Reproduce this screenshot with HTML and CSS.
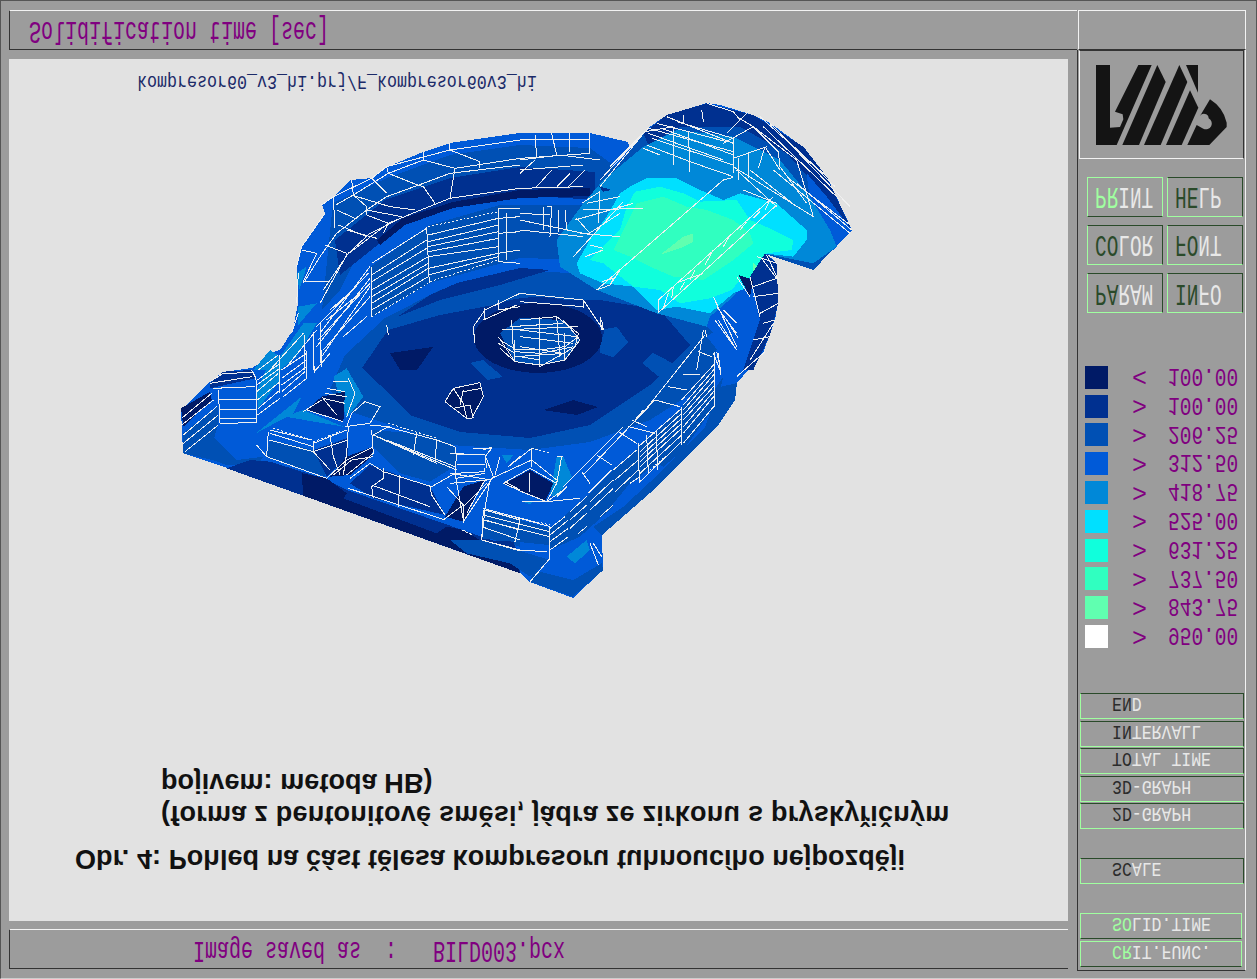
FILE: index.html
```html
<!DOCTYPE html>
<html lang="cs">
<head>
<meta charset="utf-8">
<title>Solidification time</title>
<link rel="stylesheet" href="styles.css">
</head>
<body>
<div class="screen">
  <div class="main-col">
    <div class="title-bar"><span class="flip title-text">Solidification time [sec]</span></div>
    <div class="canvas">
      <div class="path-line"><span class="flip path-text">kompresor60_v3_hi.prj/F_kompresor60v3_hi</span></div>
      <svg class="model" viewBox="9 90 1059 660" width="1059" height="660" aria-label="Casting model">
        <polygon class="c3" points="181,410 210,382 223,372 252,368 260,363 270,353 280,350 293,330 298,303 297,267 302,247 325,213 322,205 333,197 350,180 372,178 387,167 423,152 450,143 520,133 553,133 590,133 628,142 630,148 643,133 648,128 667,115 707,103 720,105 753,115 770,123 803,147 827,177 852,230 813,270 765,253 777,263 778,303 775,320 763,353 737,383 735,400 717,427 690,453 650,493 602,535 603,570 573,598 530,582 520,573 227,468 183,453"/>
        <polygon class="c2" points="330,390 345,355 385,318 440,290 520,270 600,275 700,320 720,340 705,385 650,420 590,442 530,450 450,445 390,425 345,410"/>
        <polygon class="c1" points="362,368 388,330 440,315 520,300 600,300 660,310 690,345 650,385 590,425 530,438 460,432 410,415 380,385"/>
        <polygon class="c2" points="642,363 653,353 680,367 663,380"/>
        <polygon class="c0" points="390,353 433,347 417,370 400,370"/>
        <polygon class="c0" points="543,410 573,400 598,407 577,415"/>
        <polygon class="c2" points="600,330 617,327 628,342 613,357 600,353"/>
        <polygon class="c2" points="470,363 483,360 503,377 487,380"/>
        <ellipse class="c1" cx="538" cy="330" rx="66" ry="33"/>
        <ellipse class="c0" cx="538" cy="338" rx="64" ry="35"/>
        <polygon class="c2" points="500,333 515,362 540,365 565,360 580,340 563,320 520,318"/>
        <polygon class="c3" points="335,205 387,170 450,147 520,137 590,137 628,150 590,175 520,170 450,180 400,215 360,250 340,290 320,300 325,250"/>
        <polygon class="c2" points="333,203 387,178 450,155 520,145 590,148 620,170 595,200 520,185 455,195 400,215 360,250 340,290 322,310"/>
        <polygon class="c1" points="335,240 385,200 450,178 520,167 595,172 595,200 520,195 453,207 403,225 365,255 340,275"/>
        <polygon class="c0" points="377,240 403,218 453,202 520,190 590,188 590,196 520,198 453,208 405,225 380,245"/>
        <polygon class="c2" points="372,317 370,267 430,225 500,205 590,205 590,260 520,258 430,283"/>
        <polygon class="c1" points="397,317 430,295 457,283 520,268 550,270 500,285 440,300"/>
        <polygon class="c2" points="720,387 737,383 735,400 717,427 690,453 650,493 602,535 593,527 623,507 663,470 705,427"/>
        <g transform="translate(170 90) scale(.33333)">
          <polygon class="c4" points="380,550 410,530 388,600"/>
          <polygon class="c4" points="385,650 440,640 385,705"/>
          <polygon class="c4" points="250,840 300,780 330,800 400,700 440,700 380,800 330,840"/>
          <polygon class="c2" points="495,345 540,325 500,430"/>
        </g>
        <g transform="translate(170 350) scale(.33333)">
          <polygon class="c0" points="33,175 120,125 125,150 40,230"/>
          <polygon class="c2" points="38,250 145,170 145,220 125,290 170,340 40,310"/>
          <polygon class="c1" points="120,100 160,65 245,60 255,85 120,115"/>
          <polygon class="c2" points="70,310 130,260 200,330 280,320 260,350 170,345"/>
          <polygon class="c4" points="260,125 300,30 330,15 330,90 265,175"/>
          <polygon class="c4" points="258,250 395,140 370,190"/>
          <polygon class="c4" points="490,80 530,55 580,140 530,205"/>
          <polygon class="c4" points="345,200 400,180 520,230"/>
          <polygon class="c2" points="300,270 430,300 470,340 465,380 290,320"/>
          <polygon class="c1" points="430,300 530,265 535,320 470,380"/>
          <polygon class="c0" points="480,380 530,320 610,290 605,320 540,375"/>
          <polygon class="c0" points="455,140 525,125 520,215 410,180"/>
          <polygon class="c2" points="610,240 730,250 855,290 860,345 780,395 690,370 610,290"/>
          <polygon class="c1" points="600,345 780,410 825,495 610,445 540,400"/>
          <polygon class="c0" points="825,500 880,410 945,390 880,515"/>
          <polygon class="c1" points="170,355 240,330 300,335 460,385 530,420 820,520 1050,600 1050,670"/>
          <polygon class="c0" points="395,370 470,385 530,430 520,445 800,550 830,530 880,540 930,570 1030,600 1050,670 850,598 400,437"/>
          <polygon class="c2" points="940,490 1050,520 1050,590 935,560"/>
          <polygon class="c0" points="825,155 850,115 930,98 940,140 905,205 890,205"/>
        </g>
        <g transform="translate(450 320) scale(.33333)">
          <polygon class="c2" points="240,785 368,830 460,750 455,730 370,780 250,750"/>
          <polygon class="c4" points="350,710 410,660 420,690 375,730"/>
          <polygon class="c2" points="0,660 100,660 300,720 240,770 180,730 50,700"/>
          <polygon class="c2" points="100,570 300,625 298,675 195,665 95,655"/>
          <polygon class="c4" points="320,410 340,410 365,470 320,530 300,525"/>
          <polygon class="c0" points="165,490 240,450 310,490 285,545 215,515"/>
          <polygon class="c1" points="100,660 190,665 200,690"/>
          <polygon class="c2" points="300,625 410,530 490,450 490,560 390,650 300,690"/>
          <polygon class="c2" points="490,450 695,265 795,110 795,255 695,375 540,490 490,550"/>
          <polygon class="c2" points="820,170 800,250 700,390 640,440 620,430 780,230"/>
          <polygon class="c4" points="155,405 190,405 170,430"/>
          <polygon class="c4" points="215,545 250,545 240,552"/>
          <polygon class="c3" points="770,50 800,30 830,80 810,100"/>
        </g>
        <g transform="translate(520 90) scale(.33333)">
          <polygon class="c2" points="240,285 375,125 470,75 700,75 850,170 920,260 995,420 880,540 730,490"/>
          <polygon class="c1" points="370,130 440,75 560,40 700,75 850,170 920,260 995,420 975,440 900,300 800,190 660,110 480,110 385,165"/>
          <polygon class="c3" points="860,250 920,320 995,420 940,480 880,420"/>
          <polygon class="c4" points="250,270 370,170 470,120 640,140 780,210 870,320 930,420 950,470 880,520 730,490 700,540 640,620 570,680 560,710 410,670 230,600 120,530 110,450 190,340"/>
          <polygon class="c5" points="170,520 215,440 260,380 300,310 330,290 380,265 470,265 540,300 610,330 660,310 770,340 860,420 860,450 820,500 730,490 700,540 690,590 640,610 570,670 470,650 410,660 340,590 250,580 180,550"/>
          <polygon class="c6" points="210,510 300,420 320,350 345,305 420,290 490,310 540,335 650,330 690,390 760,420 820,450 815,480 740,490 725,560 660,570 635,600 570,625 480,640 420,600 340,590 250,520"/>
          <polygon class="c7" points="300,440 350,340 430,320 500,350 560,360 640,390 690,430 700,460 640,510 550,570 460,560 390,530 330,500 280,480"/>
          <polygon class="c8" points="420,495 490,440 520,430 520,455 480,475"/>
          <polygon class="c8" points="700,520 735,545 725,560 700,555"/>
          <polygon class="c1" points="235,288 275,300 250,305"/>
          <polygon class="c3" points="590,710 640,700 690,560 720,680 700,840 650,780"/>
          <polygon class="c1" points="690,560 735,490 770,520 775,640 750,735 700,840 670,840 720,690"/>
          <polygon class="c0" points="655,555 700,570 690,620"/>
        </g>
        <path class="mesh" transform="translate(170 90) scale(.33333)" d="M455 345L490 320L605 265L650 230L840 180L1050 150M497 345L550 315L655 250L760 210L855 235L1050 205M400 580L450 500L500 430L590 360L650 320L760 280L840 250L1050 225M450 640L530 495L655 400L740 365L840 325L1050 295M460 600L535 490L600 430L700 380M545 270L550 315L590 350L590 375L655 400L640 430M605 265L650 310M650 230L655 250L730 280L760 290L795 340M760 185L760 210L855 235L840 325M840 160L840 180L930 215L930 235M500 360L555 385M590 360L695 380M545 315L660 350L735 360M490 320L495 415M395 480L440 490M440 490L400 575L480 575M465 465L530 490M505 405L590 440M530 420L620 445M380 530L395 470L465 370M380 640L385 550M365 730L385 670M300 840L400 730M350 830L440 720M450 730L600 530M440 770L600 565M455 800L600 590M480 660L560 590M470 690L570 610M520 740L590 680M440 710L595 550M445 750L600 580M460 780L600 620M605 530V680M605 600L775 500M605 640L775 535M605 520L770 415M605 555L770 450M605 575L770 475M605 620L775 520M605 660L775 560M770 410L778 580M775 435L985 385M775 455L985 405M775 470L985 425M775 485L985 445M775 500L985 470M775 535L985 490M775 555L985 500M985 355V515L1050 520M985 355H1050M985 385L1050 380M985 430L1050 425M985 490L1050 480M1010 370V510M915 760L910 710L945 660L1050 610M945 655V690M985 630V660M940 690L1040 645M985 660L1050 650M405 735V840M430 725V840M452 700V820M650 705L655 735"/>
        <path class="mesh dotted" transform="translate(170 90) scale(.33333)" d="M775 410L985 365M780 575L985 510M605 680L775 580"/>
        <path class="mesh" transform="translate(170 350) scale(.33333)" d="M35 205L125 130M35 225L130 150M40 255L140 170M40 280L145 195M45 305L145 225M145 120L150 220M120 100L245 80M130 115L255 110M145 150L258 150M150 180L258 180M150 205L258 205M150 220L258 218M258 85L260 218M245 60L258 85M120 95L160 70L245 68M260 125L325 70M262 150L330 95M265 175L330 120M262 195L330 145M330 15V130M265 60L325 15M262 90L330 40M260 105L330 55M340 140L410 85M335 125L405 65M335 105L410 50M335 60L410 10M335 85L410 30M408 0L410 85M430 0L433 70M453 0L455 50M433 65L480 10M300 240L425 270M300 250L430 290M298 270L430 305M290 320L470 385M295 245L290 320M260 285L290 320M430 275V305L480 360M430 280L530 240M430 305L535 270M480 255L490 320L510 375M535 230L530 310L520 375M605 240L610 310L530 375M470 385L530 330L610 290M490 375L545 330L610 320M525 230L600 220L630 170L585 155L545 190L530 230M600 225L655 230L610 255M610 255L860 360M620 260L800 340M650 270L855 350M650 230L800 270L855 290L860 320M740 250L730 315M800 270L795 340M540 385L600 340L640 365L785 410M605 405L780 470M535 415L825 510M640 355V385L605 410L610 445M690 375L685 470M780 410L785 435L825 495M785 410L855 370L945 365L945 355M860 315H945L950 355M860 345H945M858 385L945 370M830 410L880 465V520M945 390L890 490M950 400L880 470M820 510L880 465M940 480L935 570L1050 600M945 510L1050 540M945 480L1050 510M935 530L1050 570M490 95H535M535 85L555 130L530 200M470 115L525 125M465 130L530 140M458 145L525 160M410 180L520 215M455 140L500 195M400 185L455 150M825 155L850 115L930 98L940 140L905 205L890 205L825 155M850 115L880 160L890 205M880 125L935 115M850 175L900 165L910 205M880 120L870 165M940 300L965 292M910 295H965L945 320M990 320L975 375M1020 345L1050 320M1005 395L1050 420"/>
        <path class="mesh dotted" transform="translate(170 350) scale(.33333)" d="M310 235L425 270M430 275L510 245M585 155L630 170M655 220L800 265M875 540L910 555M950 480L1050 510"/>
        <path class="mesh" transform="translate(450 320) scale(.33333)" d="M300 625L345 590M300 645L355 600M300 665L355 625M300 690L355 650M360 575L410 530M360 600L410 555M360 625L410 580M385 640L410 620M415 520L485 450M420 545L490 480M420 570L490 505M450 590L490 555M490 450L560 390M495 480L565 420M495 515L565 450M540 490L570 470M565 380L695 265M570 410L695 295M570 440L695 325M570 485L695 365M570 395L695 280M570 425L695 310M570 460L695 345M565 370L568 490M590 345L595 460M620 330L622 450M695 260V375M795 95V260M695 240L795 130M700 255L795 145M700 270L795 160M700 285L795 178M700 300L795 195M700 320L795 210M700 340L795 225M700 370L795 255M800 95L812 150M805 100L812 165M340 500L520 320M400 465L615 240M440 405L485 435M395 455L420 490M505 335L560 370M535 320L615 340M545 300L590 320M615 240L690 260M655 200L710 210M700 165L750 165M745 95L785 110M590 265L765 45M765 30L770 50M555 300L580 270M100 565L300 620M100 585L300 635M100 600L300 650M95 660L200 690M105 565L95 660M210 600L195 665M300 620V715L240 785M200 690L290 695M118 490L105 565M215 545H290M160 490L240 445L320 490L290 545L215 515L160 490M245 385V440M175 440L245 385M125 475L245 420L320 480M0 400L105 405L130 470L40 605M20 400L15 460L40 600M0 460L125 480M0 490L110 480M320 410H340M320 490L335 410M340 510L290 545L390 535M320 530L350 500M240 460V515M420 670L445 735M430 670L455 710M70 30L75 70M455 0L460 30M145 50L195 125L270 135L345 120L390 60L340 0M145 70L195 100M195 110L345 100M195 95L270 100L370 80M150 85L195 125M195 60V125M270 60V135M345 40V120M150 60L200 90L270 90L345 80L385 50M180 20L340 10M185 0L190 90M270 0V60M155 30L385 20M805 0L860 90M830 0L865 55M860 170L945 95M900 120L970 10"/>
        <path class="mesh dotted" transform="translate(450 320) scale(.33333)" d="M245 385L300 400M110 570L300 615M40 630L65 645M640 415L600 450"/>
        <path class="mesh" transform="translate(520 90) scale(.33333)" d="M240 290L375 125L460 110M240 270L385 115M270 230L370 130M385 130L610 210M385 115L640 185M440 80L640 160M410 100L620 155M380 165L510 215L640 260M370 175L420 195M395 145L640 225M425 115L640 195M470 95L640 145M460 110V225M505 125L510 245M490 75V100M545 60L550 95M620 130L690 60M610 160L700 110M640 205L740 170M700 110L775 185L780 230L860 340M735 170L780 240M650 80L700 110L830 210L880 380M560 40L640 65L660 90L690 60M720 80L920 260M730 110L960 330M750 100L945 290M780 130L990 350M640 230L880 380M650 240L770 350M690 240L830 350M760 240L990 430M800 260L990 405M830 280L995 420M670 300L770 340M640 140V250M655 205V270M685 185V265M715 235L735 170M230 600L610 270L640 262M270 585L230 600M245 575L280 565M270 585L280 565M300 540L270 585M415 630L760 320M415 668L770 345M415 630V668M430 655L445 610M455 625L460 590M480 600L495 575M510 570L525 540M555 525L580 480M610 470L630 435M660 420L680 395M700 385L720 365M735 360L750 330M480 575L550 550M160 500L310 335M200 340L300 320M185 340L240 305M170 385L210 430M200 435L300 370M240 305L235 400M165 390L340 340M190 360L370 355M180 430L300 440M195 500L250 480M210 465L250 475M0 390L190 430M0 420L190 440M0 370L90 375M80 350H95L90 440M115 360V425M70 350V420M135 360L140 420M0 150H210M0 210L120 195L240 210M45 135L50 200M95 130L110 195M150 130V185M210 130V190L0 205M45 210L0 250M95 240L50 290M150 250L110 290M195 240L145 290M0 240L190 225M0 295L190 290M690 560L720 680M710 500L770 520M700 590L770 565M720 670L775 640M730 700L765 690M700 750L750 740M700 620L775 610M725 505L770 565M740 495L775 570M650 560L690 620M580 620L650 770M590 650L650 730M585 690L650 780M610 660L650 700M530 840L550 720M580 790L600 840M0 610L190 630L250 720M0 635L190 650M190 630V655M240 680L245 720M0 690L110 680L175 730L165 770L60 830M60 680V830M110 680L120 800M0 720L170 740M0 740L160 760M0 770L130 790M0 800L60 810"/>
      </svg>
      <div class="caption">
        <span class="flip cap-text cap-three">pojivem: metoda HB)</span>
        <span class="flip cap-text cap-two">(forma z bentonitové směsi, jádra ze zirkonu s pryskyřičným</span>
        <span class="flip cap-text cap-one">Obr. 4: Pohled na část tělesa kompresoru tuhnoucího nejpozději</span>
      </div>
    </div>
    <div class="status-bar"><span class="flip status-text">Image saved as  :   BILD003.pcx</span></div>
  </div>
  <div class="side-col">
    <div class="corner-box"></div>
    <div class="sidebar">
      <div class="logo-box">
        <svg class="logo" viewBox="27 147 495 324" width="165" height="108" aria-label="Logo">
          <polygon points="78,192 120,192 120,380 150,378 160,355 158,340 135,332 205,192 245,192 140,432 78,432"/>
          <polygon points="262,192 287,243 207,432 157,432"/>
          <polygon points="328,192 352,243 272,432 222,432"/>
          <polygon points="360,268 385,320 335,432 288,432"/>
          <polygon points="348,192 384,192 384,275"/>
          <path d="M352 432L380 372L400 383A17 17 0 0 0 416 352A14 14 0 0 0 390 345L420 295Q460 320 470 365V378L418 432Z"/>
        </svg>
      </div>
      <div class="func-grid">
        <button class="func raised"><span class="flip func-text"><span class="green">PR</span><span class="light">INT</span></span></button>
        <button class="func"><span class="flip func-text"><span class="dark">HE</span><span class="light">LP</span></span></button>
        <button class="func"><span class="flip func-text"><span class="dark">CO</span><span class="light">LOR</span></span></button>
        <button class="func"><span class="flip func-text"><span class="dark">FO</span><span class="light">NT</span></span></button>
        <button class="func"><span class="flip func-text"><span class="dark">PA</span><span class="light">RAM</span></span></button>
        <button class="func"><span class="flip func-text"><span class="dark">IN</span><span class="light">FO</span></span></button>
      </div>
      <div class="legend">
        <div class="legend-row"><span class="swatch s0"></span><span class="flip legend-sym">&lt;</span><span class="flip legend-val">100.00</span></div>
        <div class="legend-row"><span class="swatch s1"></span><span class="flip legend-sym">&gt;</span><span class="flip legend-val">100.00</span></div>
        <div class="legend-row"><span class="swatch s2"></span><span class="flip legend-sym">&gt;</span><span class="flip legend-val">206.25</span></div>
        <div class="legend-row"><span class="swatch s3"></span><span class="flip legend-sym">&gt;</span><span class="flip legend-val">312.50</span></div>
        <div class="legend-row"><span class="swatch s4"></span><span class="flip legend-sym">&gt;</span><span class="flip legend-val">418.75</span></div>
        <div class="legend-row"><span class="swatch s5"></span><span class="flip legend-sym">&gt;</span><span class="flip legend-val">525.00</span></div>
        <div class="legend-row"><span class="swatch s6"></span><span class="flip legend-sym">&gt;</span><span class="flip legend-val">631.25</span></div>
        <div class="legend-row"><span class="swatch s7"></span><span class="flip legend-sym">&gt;</span><span class="flip legend-val">737.50</span></div>
        <div class="legend-row"><span class="swatch s8"></span><span class="flip legend-sym">&gt;</span><span class="flip legend-val">843.75</span></div>
        <div class="legend-row"><span class="swatch s9"></span><span class="flip legend-sym">&gt;</span><span class="flip legend-val">950.00</span></div>
      </div>
      <div class="menu menu-main">
        <button class="item"><span class="flip item-text"><span class="ink">EN</span><span class="light">D</span></span></button>
        <button class="item"><span class="flip item-text"><span class="ink">IN</span><span class="light">TERVALL</span></span></button>
        <button class="item"><span class="flip item-text"><span class="ink">TO</span><span class="light">TAL TIME</span></span></button>
        <button class="item"><span class="flip item-text"><span class="ink">3D</span><span class="light">-GRAPH</span></span></button>
        <button class="item"><span class="flip item-text"><span class="ink">2D</span><span class="light">-GRAPH</span></span></button>
      </div>
      <div class="menu menu-scale">
        <button class="item"><span class="flip item-text"><span class="ink">SC</span><span class="light">ALE</span></span></button>
      </div>
      <div class="menu menu-mode">
        <button class="item mode"><span class="flip item-text"><span class="green">SO</span><span class="light">LID.TIME</span></span></button>
        <button class="item mode"><span class="flip item-text"><span class="green">CR</span><span class="light">IT.FUNC.</span></span></button>
      </div>
    </div>
  </div>
</div>
</body>
</html>
```

FILE: styles.css
```css
* { box-sizing: border-box; }
html, body { margin: 0; height: 100%; overflow: hidden; background: #9c9c9c; }
.screen {
  width: 1257px; height: 979px;
  display: flex;
  padding: 9px 10px 8px 8px;
  border: 1px solid #555;
  border-bottom-color: #ccc;
  background: #9c9c9c;
  font-family: "Liberation Mono", monospace;
}
.flip { display: inline-block; white-space: pre; line-height: .8; transform-origin: center; }
.main-col { width: 1068px; display: flex; flex-direction: column; }
.title-bar {
  height: 40px; flex: none;
  border-top: 1px solid #f2f2f2; border-left: 1px solid #333; border-bottom: 1px solid #333;
  display: flex; align-items: center; padding-left: 19px;
}
.title-text { font-size: 20px; color: #800080; transform: scaleY(-1.55); }
.canvas {
  width: 1059px; height: 862px; flex: none; margin-top: 9px;
  background: #e2e2e2; display: flex; flex-direction: column;
}
.path-line { height: 31px; flex: none; display: flex; align-items: flex-end; padding-left: 128px; padding-bottom: 2px; }
.path-text { font-size: 16.67px; color: #1b2a68; transform: scaleY(-1.2); }
.model { display: block; flex: none; shape-rendering: crispEdges; }
.model .c0 { fill: #001a66; }
.model .c1 { fill: #003090; }
.model .c2 { fill: #0050b4; }
.model .c3 { fill: #005ad8; }
.model .c4 { fill: #0088d8; }
.model .c5 { fill: #00e0ff; }
.model .c6 { fill: #10ffdc; }
.model .c7 { fill: #30ffc0; }
.model .c8 { fill: #60ffb0; }
.mesh { fill: none; stroke: #f0f0f0; stroke-width: 1px; vector-effect: non-scaling-stroke; }
.dotted { stroke-dasharray: 2 2; }
.caption { display: flex; flex-direction: column; font-family: "Liberation Sans", sans-serif; margin-top: 22px; }
.cap-text { font-size: 27px; font-weight: 700; letter-spacing: .08px; color: #111; transform: scaleY(-1.05); align-self: flex-start; }
.cap-three { margin-left: 152px; }
.cap-two { margin-left: 152px; margin-top: 10px; letter-spacing: .24px; }
.cap-one { margin-left: 66px; margin-top: 23px; }
.status-bar {
  width: 1059px; height: 40px; flex: none; margin-top: 8px;
  border-top: 1px solid #f2f2f2; border-left: 1px solid #333; border-bottom: 1px solid #333;
  display: flex; align-items: center; padding-left: 183px;
}
.status-text { font-size: 20px; color: #800080; transform: scaleY(-1.5); }
.side-col { width: 169px; display: flex; flex-direction: column; }
.corner-box {
  height: 40px; flex: none; margin-left: 1px;
  border: 1px solid #f2f2f2; border-bottom-color: #333;
}
.sidebar {
  height: 921px; flex: none;
  border-left: 1px solid #333; border-right: 1px solid #f2f2f2; border-bottom: 1px solid #333;
  display: flex; flex-direction: column;
}
.logo-box {
  width: 165px; height: 109px; flex: none; margin-left: 1px;
  border-top: 1px solid #333; border-right: 1px solid #333;
  border-bottom: 1px solid #f2f2f2; border-left: 1px solid #f2f2f2;
}
.logo { display: block; margin: -1px; }
.logo polygon, .logo path { fill: #141414; }
.func-grid {
  display: grid; grid-template-columns: 76px 76px; grid-auto-rows: 40px;
  column-gap: 4px; row-gap: 8.2px; margin: 18px 0 0 9px;
}
button { margin: 0; padding: 0; background: none; font-family: inherit; display: flex; align-items: center; border-style: solid; border-width: 1px; }
.func {
  border-color: #2a4a2a #2a4a2a #a0ffa0 #a0ffa0; padding-left: 7px;
}
.func.raised { border-color: #a0ffa0 #a0ffa0 #2a4a2a #a0ffa0; }
.func-text { font-size: 19.4px; margin-top: -4px; transform: scaleY(-1.5); }
.green { color: #a0ffa0; }
.dark { color: #2a4a2a; }
.ink { color: #2c2c2c; }
.light { color: #e8e8e8; }
.legend { display: flex; flex-direction: column; row-gap: 5.8px; margin-top: 52.5px; }
.legend-row { height: 23px; display: flex; align-items: center; padding-left: 7px; }
.swatch { width: 23px; height: 23px; flex: none; }
.s0 { background: #001a66; } .s1 { background: #003090; } .s2 { background: #0050b4; }
.s3 { background: #005ad8; } .s4 { background: #0088d8; } .s5 { background: #00e0ff; }
.s6 { background: #10ffdc; } .s7 { background: #30ffc0; } .s8 { background: #60ffb0; } .s9 { background: #fff; }
.legend-sym { width: 36px; margin-left: 24px; margin-top: -4px; font-size: 25px; color: #800080; transform: scaleY(-1); }
.legend-val { font-size: 19.5px; margin-top: -5px; color: #800080; transform: scaleY(-1.3); }
.menu { display: flex; flex-direction: column; row-gap: 1.5px; margin-left: 2px; }
.menu-main { margin-top: 45px; }
.menu-scale { margin-top: 29px; }
.menu-mode { margin-top: 29px; }
.item {
  width: 164px; height: 26px; flex: none; padding-left: 31px;
  border-color: #2a4a2a #2a4a2a #a0ffa0 #a0ffa0;
}
.item.mode { width: 162px; border-color: #a0ffa0 #a0ffa0 #2a4a2a #a0ffa0; }
.item-text { font-size: 16.5px; margin-top: -4px; transform: scaleY(-1.2); }
```
